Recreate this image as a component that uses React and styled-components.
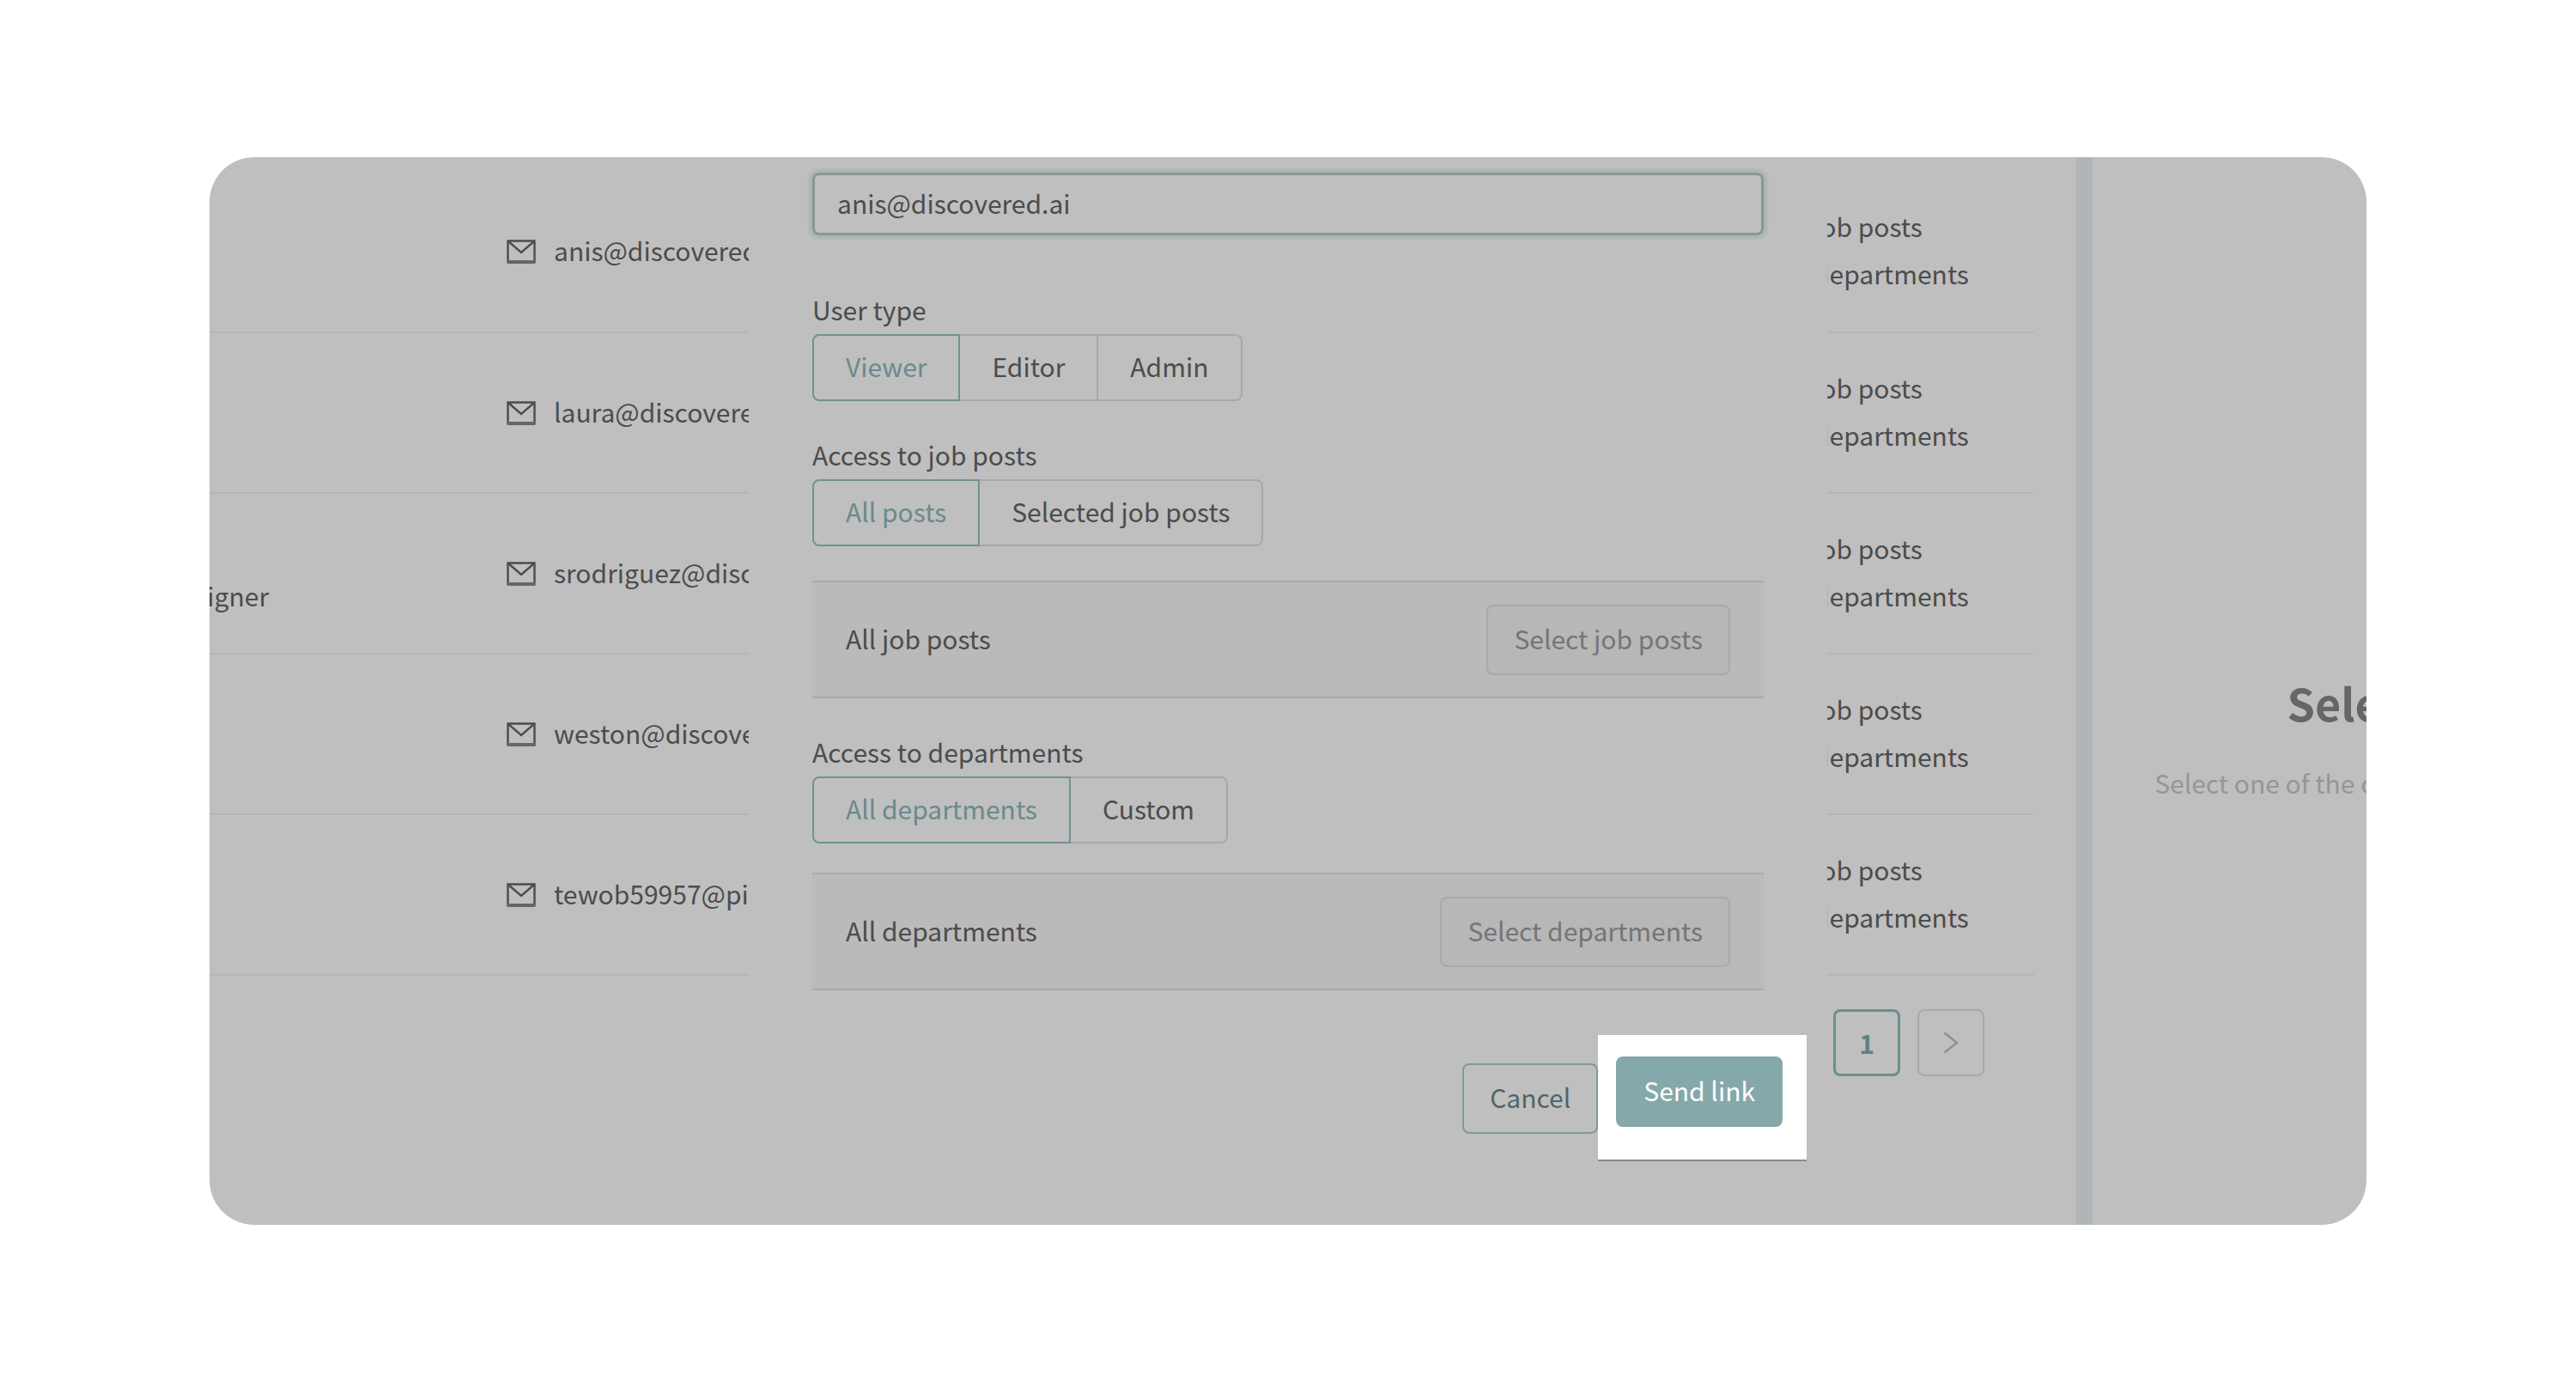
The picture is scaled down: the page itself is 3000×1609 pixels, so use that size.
import { useState } from "react";
import styled, { createGlobalStyle } from "styled-components";

const people = [
  { email: "anis@discovered.ai" },
  { email: "laura@discovered.ai" },
  { email: "srodriguez@discovered.ai", role: ["UX", "Designer"] },
  { email: "weston@discovered.ai" },
  { email: "tewob59957@pixiil.com" },
];

function MailIcon() {
  return (
    <svg width="34" height="28" viewBox="0 0 34 28" fill="none" stroke="#4c4c4c" strokeWidth="2.4" aria-hidden="true">
      <path d="M1.5 1.5H32.5V26H1.5Z" />
      <path d="M2 2L17 15L32 2" />
      <path d="M1 26H33" stroke="#666" strokeWidth="4" />
    </svg>
  );
}

function Segmented({ id, label, options }) {
  const [value, setValue] = useState(options[0]);
  return (
    <>
      <Label id={id}>{label}</Label>
      <Segments role="radiogroup" aria-labelledby={id}>
        {options.map((option) => (
          <Segment key={option} $active={option === value}>
            <input type="radio" name={id} checked={option === value} onChange={() => setValue(option)} />
            {option}
          </Segment>
        ))}
      </Segments>
    </>
  );
}

function App() {
  const [email, setEmail] = useState("anis@discovered.ai");
  return (
    <Page>
      <GlobalStyle />
      <Frame>
        <Background>
          <Main>
            <Table>
              <colgroup>
                <col width="400" />
                <col />
                <col width="299" />
              </colgroup>
              <tbody>
                {people.map((person) => (
                  <tr key={person.email}>
                    <td>{person.role && <Lines>{person.role.map((line) => <span key={line}>{line}</span>)}</Lines>}</td>
                    <td>
                      <Mail>
                        <MailIcon />
                        <Text>{person.email}</Text>
                      </Mail>
                    </td>
                    <td>
                      <Lines>
                        <span>All job posts</span>
                        <span>All departments</span>
                      </Lines>
                    </td>
                  </tr>
                ))}
              </tbody>
            </Table>
            <Pagination>
              <PageButton $active>1</PageButton>
              <PageButton aria-label="Next page">
                <svg width="18" height="26" viewBox="0 0 18 26" fill="none" stroke="#8f8f8f" strokeWidth="2.4">
                  <path d="M1.5 1.5L16 13L1.5 24.5" />
                </svg>
              </PageButton>
            </Pagination>
          </Main>
          <Aside>
            <Empty>
              <h2>Select User</h2>
              <p>Select one of the colleagues to view details</p>
            </Empty>
          </Aside>
        </Background>

        <Modal>
          <Body>
            <Input type="email" aria-label="Email" value={email} onChange={(e) => setEmail(e.target.value)} />
            <Field $top={64}>
              <Segmented id="user-type" label="User type" options={["Viewer", "Editor", "Admin"]} />
            </Field>
            <Field $top={40}>
              <Segmented id="job-posts" label="Access to job posts" options={["All posts", "Selected job posts"]} />
            </Field>
            <Panel $top={40}>
              <Text>All job posts</Text>
              <Button $kind="muted" disabled>Select job posts</Button>
            </Panel>
            <Field $top={40}>
              <Segmented id="departments" label="Access to departments" options={["All departments", "Custom"]} />
            </Field>
            <Panel $top={34}>
              <Text>All departments</Text>
              <Button $kind="muted" disabled>Select departments</Button>
            </Panel>
          </Body>
          <Footer>
            <Button $kind="outline">Cancel</Button>
            <Spotlight>
              <Button $kind="primary">Send link</Button>
            </Spotlight>
          </Footer>
        </Modal>
      </Frame>
    </Page>
  );
}

export default App;

// styled components

const GlobalStyle = createGlobalStyle`
*{
  box-sizing: border-box;
}
body{
  margin: 0;
  background-color: #fff;
}
body, button, input{
  font-family: "Noto Sans CJK SC", "Noto Sans", sans-serif;
  font-size: 30px;
  line-height: 44px;
  color: #4c4c4c;
}
`
const Page = styled.div`
padding: 183px 244px;
`
const Frame = styled.main`
display: grid;
grid-template-columns: minmax(0, 1fr);
background-color: #bfbfbf;
border-radius: 52px;
overflow: hidden;
`
// background and modal share the one grid cell
const Background = styled.div`
grid-area: 1 / 1;
display: flex;
min-width: 0;
`
const Main = styled.section`
flex: 1;
min-width: 0;
padding-right: 49px;
padding-top: 17px;
margin-left: -54px;
`
const Table = styled.table`
width: 100%;
table-layout: fixed;
border-collapse: collapse;
td{
  height: 187px;
  padding: 0;
  border-bottom: 2px solid #b5b5b5;
  white-space: nowrap;
}
`
const Text = styled.span`
padding-bottom: 4px;
`
const Lines = styled.div`
display: flex;
flex-direction: column;
padding-bottom: 4px;
line-height: 55px;
`
const Mail = styled.div`
display: flex;
align-items: center;
gap: 21px;
`
const Pagination = styled.nav`
display: flex;
justify-content: flex-end;
gap: 20px;
margin-top: 39px;
padding-right: 58px;
`
const PageButton = styled.button`
display: flex;
align-items: center;
justify-content: center;
width: 78px;
height: 78px;
padding: 0;
border: ${(p) => (p.$active ? "3px solid #6a8e8e" : "2px solid #a8a8a8")};
border-radius: 8px;
background-color: transparent;
color: #5f8080;
font-weight: bold;
cursor: pointer;
`
const Aside = styled.aside`
width: 338px;
flex-shrink: 0;
overflow: hidden;
border-left: 19px solid #b0b6b7;
`
const Empty = styled.div`
width: 740px;
padding-top: 599px;
text-align: center;
white-space: nowrap;
h2{
  margin: 0;
  font-size: 52px;
  line-height: 72px;
  color: #666;
}
p{
  margin: 35px 0 0;
  color: #969696;
}
`
const Modal = styled.form`
grid-area: 1 / 1;
justify-self: center;
z-index: 1;
width: 1256px;
max-width: 100%;
padding: 18px 0 74px;
background-color: #bfbfbf;
`
const Body = styled.div`
padding: 0 74px;
`
const Input = styled.input`
display: block;
width: 100%;
height: 73px;
padding: 0 26px 4px;
border: 3px solid #8b9696;
border-radius: 8px;
outline: none;
background-color: transparent;
box-shadow: 0 0 3px 4px #adb3b3;
`
const Field = styled.div`
margin-top: ${(p) => p.$top}px;
`
const Label = styled.div`
margin-bottom: 7px;
`
const Segments = styled.div`
display: flex;
`
const Segment = styled.label`
position: relative;
height: 78px;
padding: 13px 37px;
border: 2px solid ${(p) => (p.$active ? "#6f9292" : "#a8a8a8")};
z-index: ${(p) => (p.$active ? 1 : 0)};
color: ${(p) => (p.$active ? "#6a8a8c" : "#4c4c4c")};
cursor: pointer;
& + &{
  margin-left: -2px;
}
&:first-child{
  border-radius: 8px 0 0 8px;
}
&:last-child{
  border-radius: 0 8px 8px 0;
}
input{
  position: absolute;
  opacity: 0;
}
`
const Panel = styled.div`
display: flex;
align-items: center;
justify-content: space-between;
height: 137px;
margin-top: ${(p) => p.$top}px;
padding: 0 39px;
border-top: 2px solid #a9a9a9;
border-bottom: 2px solid #a9a9a9;
background-color: #bababa;
`
const kinds = {
  muted: "border-color: #a9a9a9; background-color: #b7b7b7; color: #757575;",
  outline: "border-color: #7d9a9a; background-color: transparent; color: #4f6666;",
  primary: "border-color: #85a9aa; background-color: #85a9aa; color: #fff;",
}
const Button = styled.button`
height: 82px;
padding: 0 30px 4px;
border: 2px solid;
border-radius: 8px;
cursor: pointer;
${(p) => kinds[p.$kind]}
`
const Footer = styled.footer`
display: flex;
align-items: center;
justify-content: flex-end;
margin-top: 52px;
padding-right: 24px;
`
const Spotlight = styled.div`
padding: 25px 28px 38px 21px;
border-bottom: 2px solid #8a8a8a;
background-color: #fff;
`
